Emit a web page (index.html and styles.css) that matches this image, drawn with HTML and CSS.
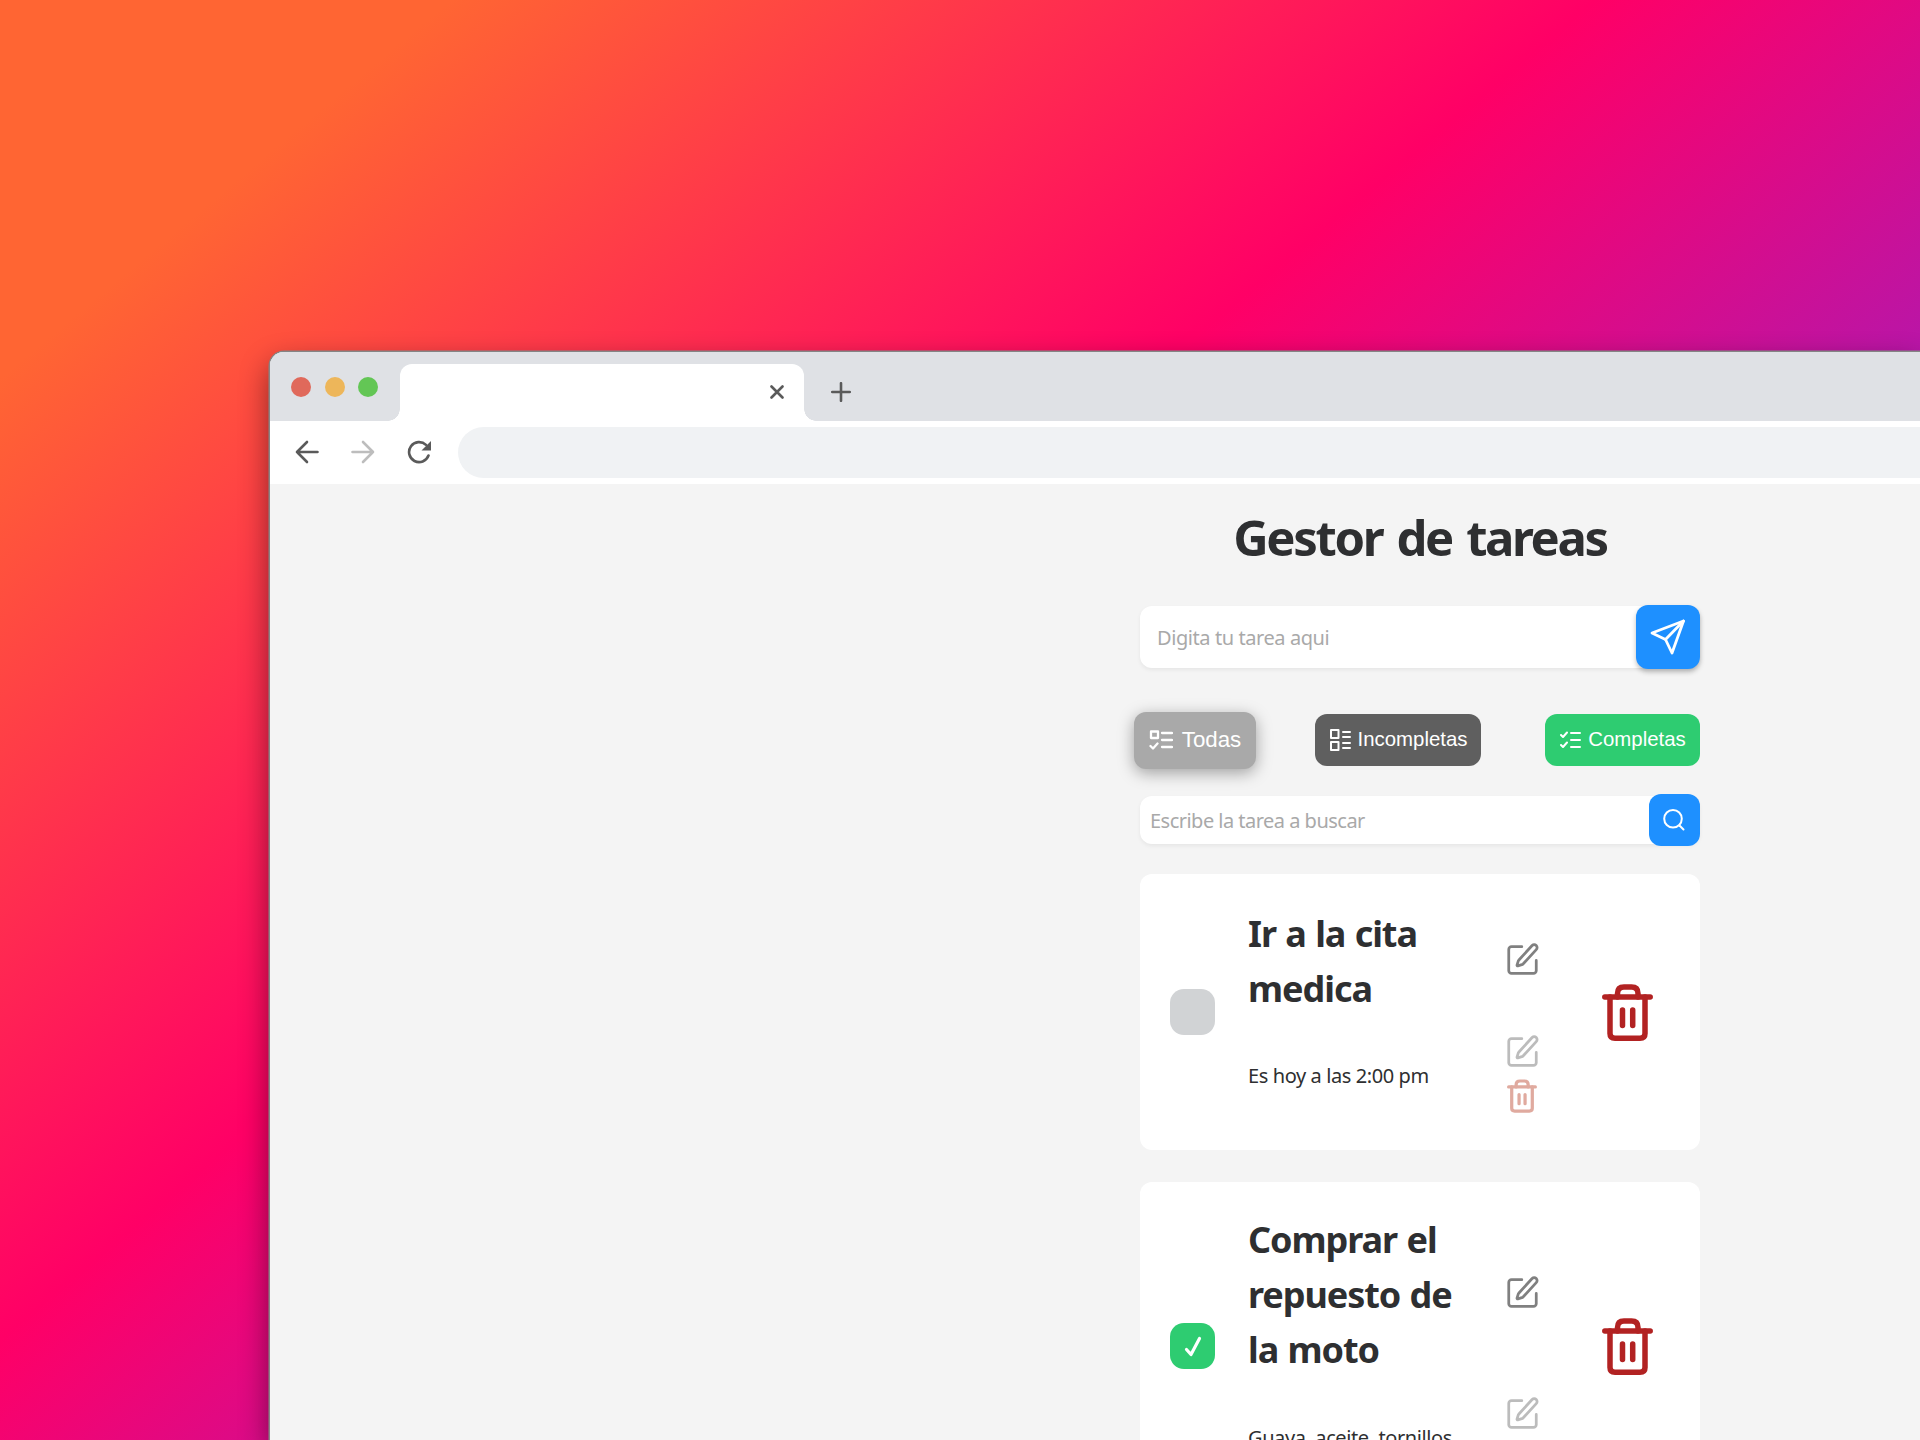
FILE: index.html
```html
<!DOCTYPE html>
<html lang="es">
<head>
<meta charset="utf-8">
<title>Gestor de tareas</title>
<link rel="stylesheet" href="styles.css">
</head>
<body>
<svg class="defs" aria-hidden="true">
  <symbol id="edit" viewBox="0 0 24 24" fill="none" stroke="currentColor" stroke-width="2" stroke-linecap="round" stroke-linejoin="round"><path d="M11.500 3H4a2 2 0 0 0-2 2v15.500a2 2 0 0 0 2 2h16a2 2 0 0 0 2-2V13"/><path d="M19 2.200a2.100 2.100 0 0 1 3 3L12.400 15.600a2 2 0 0 1-.9.5l-2.900.9a.5.5 0 0 1-.6-.6l.9-2.900a2 2 0 0 1 .5-.8z"/></symbol>
  <symbol id="trash" viewBox="0 0 51 57" fill="none" stroke="currentColor" stroke-width="5.500" stroke-linecap="round" stroke-linejoin="round"><path d="M2.800 13h45.400"/><path d="M8 13v36.500q0 4.700 5 4.700h25q5 0 5-4.700V13"/><path d="M15.500 13V9.500q0-6.500 6.500-6.500h7.500Q36 3 36 9.500V13"/><path d="M20.500 26v15.500M30.700 26v15.500"/></symbol>
</svg>
<div class="window">
  <header class="tabs">
    <div class="lights"><i class="red"></i><i class="yellow"></i><i class="green"></i></div>
    <div class="tab"><svg width="14" height="14" viewBox="0 0 14 14"><path d="M1.500 1.500l11 11M12.500 1.500l-11 11"/></svg></div>
    <div class="newtab"><svg width="20" height="20" viewBox="0 0 20 20"><path d="M10 1.200v17.600M1.200 10h17.600"/></svg></div>
  </header>
  <nav class="toolbar">
    <svg width="24" height="24" viewBox="0 0 24 24"><path d="M22.500 12H2M12 2L2 12l10 10"/></svg>
    <svg class="off" width="24" height="24" viewBox="0 0 24 24"><path d="M1.500 12H22M12 2l10 10-10 10"/></svg>
    <svg width="24" height="24" viewBox="0 0 24 24"><path d="M21.500 15.500A10 10 0 1 1 19 4.900"/><path class="solid" d="M24 1v9.500h-9.500z"/></svg>
    <div class="url"></div>
  </nav>
  <main class="page">
    <div class="app">
      <h1>Gestor de tareas</h1>
      <div class="field add"><span>Digita tu tarea aqui</span>
        <button class="send"><svg width="36" height="36" viewBox="0 0 36 36"><path d="M33.500 2L2 14l13.500 6.500L22 34z"/><path d="M33.500 2l-18 18.500"/></svg></button>
      </div>
      <div class="filters">
        <button class="all"><svg width="24" height="20" viewBox="0 0 24 20"><path d="M2 1.500h7V8H2zM1.500 16l2.500 2.500 4.500-5M13 3h10M13 10h10M13 17h10"/></svg><span>Todas</span></button>
        <button class="todo"><svg width="21" height="22" viewBox="0 0 21 22"><path d="M1 1h7.500v8H1zM1 13h7.500v8H1zM13 3h7M13 8h7M13 14h7M13 19h7"/></svg><span>Incompletas</span></button>
        <button class="done"><svg width="21" height="18" viewBox="0 0 21 18"><path d="M1 4l2 2 4-4.500M1 14l2 2 4-4.500M11 2h9M11 9h9M11 16h9"/></svg><span>Completas</span></button>
      </div>
      <div class="field search"><span>Escribe la tarea a buscar</span>
        <button class="find"><svg width="22" height="22" viewBox="0 0 22 22"><circle cx="10" cy="9.800" r="8.800"/><path d="M16.500 16.500L20.500 20.500"/></svg></button>
      </div>
      <article class="task">
        <div class="box"></div>
        <div class="body">
          <h2>Ir a la cita medica</h2><svg class="edit"><use href="#edit"/></svg>
          <p>Es hoy a las 2:00 pm</p>
          <div class="mini"><svg class="edit pale"><use href="#edit"/></svg><svg class="bin pale"><use href="#trash"/></svg></div>
        </div>
        <svg class="trash"><use href="#trash"/></svg>
      </article>
      <article class="task">
        <div class="box checked"><svg width="18" height="22" viewBox="0 0 18 22"><path d="M2.500 14.500l4.500 5L15.500 3.500"/></svg></div>
        <div class="body">
          <h2>Comprar el repuesto de la moto</h2><svg class="edit"><use href="#edit"/></svg>
          <p>Guaya, aceite, tornillos</p>
          <div class="mini"><svg class="edit pale"><use href="#edit"/></svg><svg class="bin pale"><use href="#trash"/></svg></div>
        </div>
        <svg class="trash"><use href="#trash"/></svg>
      </article>
    </div>
  </main>
</div>
</body>
</html>
```
FILE: styles.css
```css
* { box-sizing: border-box; }
html, body { margin: 0; width: 1920px; height: 1440px; overflow: hidden; }
body {
  padding: 352px 0 0 270px;
  background: linear-gradient(140deg, #ff6533 0%, #ff6533 12.400%, #ff0066 43.900%, #8a24d3 78%);
  font-family: "Noto Sans", "Open Sans", sans-serif;
  color: #2e2f31;
}
svg { display: block; flex: none; fill: none; stroke-linecap: round; stroke-linejoin: round; }
button { border: 0; padding: 0; color: #fff; display: flex; align-items: center; justify-content: center; }
.defs { display: none; }
.window {
  width: 1650px; height: 1088px; overflow: hidden;
  border-radius: 14px 0 0 0; background: #f4f4f4;
  box-shadow: 0 0 0 1.500px #858585, 0 12px 30px rgba(0,0,0,.48);
}
.tabs { height: 69px; display: flex; align-items: flex-end; background: #dfe1e5; }
.lights { width: 130px; height: 69px; padding: 0 0 0 21px; display: flex; gap: 13.500px; align-items: center; background: #dfe1e5; }
.lights i { width: 20px; height: 20px; border-radius: 50%; }
.red { background: #e0695b; }
.yellow { background: #edb65a; }
.green { background: #63c655; }
.tab { width: 404px; height: 57px; border-radius: 12px 12px 0 0; background: #fff; display: flex; align-items: center; justify-content: flex-end; padding-right: 20px; position: relative; }
.tab::before, .tab::after { content: ""; position: absolute; bottom: 0; width: 12px; height: 12px; }
.tab::before { left: -12px; background: radial-gradient(circle at 0 0, transparent 11.500px, #fff 12px); }
.tab::after { right: -12px; background: radial-gradient(circle at 100% 0, transparent 11.500px, #fff 12px); }
.tabs svg, .toolbar svg { stroke: #5a5a5a; stroke-width: 2.600; }
.tab svg { margin-bottom: 1px; }
.newtab { padding: 0 0 19px 27px; }
.toolbar { height: 63px; background: #fff; display: flex; align-items: center; padding-left: 25px; gap: 32px; }
.toolbar svg { margin-bottom: 2px; }
.toolbar .off { stroke: #bdbdbd; }
.toolbar .solid { fill: #5a5a5a; stroke: none; }
.url { flex: 1; height: 51px; margin-left: -5.500px; border-radius: 26px 0 0 26px; background: #f0f2f4; }
.page { padding-left: 870px; }
.app { width: 560px; display: flex; flex-direction: column; }
h1 { margin: 0; height: 120px; padding-top: 19px; line-height: 68px; font-size: 49px; font-weight: 700; letter-spacing: -2.350px; word-spacing: 3.800px; text-align: center; white-space: nowrap; }
.field { display: flex; justify-content: space-between; align-items: center; background: #fff; border-radius: 12px; box-shadow: 0 2px 4px rgba(0,0,0,.06); color: #a9a9a9; font-size: 20px; white-space: nowrap; }
.add { height: 62px; margin-top: 2px; padding-left: 17px; letter-spacing: -.42px; }
.send { width: 64px; height: 64px; margin-top: -1px; border-radius: 12px; background: #1e90ff; box-shadow: 0 3px 5px rgba(0,0,0,.25); }
.send svg { stroke: #fff; stroke-width: 2.800; }
.filters { height: 52px; margin: 46px 0 0 -6px; display: flex; justify-content: space-between; align-items: center; font-family: "Liberation Sans", sans-serif; }
.filters button { height: 52px; border-radius: 12px; gap: 7px; font: 20.400px "Liberation Sans", sans-serif; }
.filters span { margin-bottom: 1px; }
.filters svg { stroke: #fff; stroke-width: 2; }
.filters .all { width: 122px; height: 57px; background: #a9a9a9; font-size: 22.300px; gap: 9px; box-shadow: 0 4px 16px rgba(0,0,0,.35); }
.filters .all svg { stroke-width: 2.300; }
.filters .todo { width: 166px; background: #5f5f5f; margin-right: 5px; padding-left: 1px; }
.filters .done { width: 155px; background: #2ecc71; padding-left: 1px; }
.search { height: 48px; margin-top: 30px; padding-left: 10px; letter-spacing: -.52px; }
.find { width: 51px; height: 52px; margin-bottom: 0; border-radius: 12px; background: #1e90ff; }
.find svg { stroke: #fff; stroke-width: 2; margin: 0 1px 1px 0; }
.task { margin-top: 30px; padding: 0 47px 0 30px; height: 276px; flex: none; background: #fff; border-radius: 12px; display: flex; align-items: center; }
.task + .task { margin-top: 32px; height: 328px; }
.box { width: 45px; height: 46px; border-radius: 14px; background: #d1d3d5; display: flex; align-items: center; justify-content: center; flex: none; }
.checked { background: #2ecc71; }
.checked svg { stroke: #fff; stroke-width: 3.200; }
.body { width: 292px; margin-left: 33px; display: grid; grid-template-columns: 250px 42px; row-gap: 22px; align-items: center; flex: none; }
.body h2 { margin: 0; width: 215px; font-size: 36px; line-height: 54.700px; letter-spacing: -1.050px; word-spacing: 1px; }
.body p { margin: 0 0 3px; font-size: 20px; line-height: 30px; letter-spacing: -.4px; white-space: nowrap; }
.edit { width: 33px; height: 34px; margin: 0 0 6px 8px; color: #808080; }
.edit.pale { margin-bottom: 0; color: #bcbcbc; }
.mini { display: flex; flex-direction: column; gap: 11px; margin: -4px 0 4px; }
.bin { width: 30px; height: 34px; margin-left: 9px; }
.bin.pale { color: #e0aa9f; }
.trash { width: 51px; height: 57px; margin-left: auto; color: #b22222; }
```
